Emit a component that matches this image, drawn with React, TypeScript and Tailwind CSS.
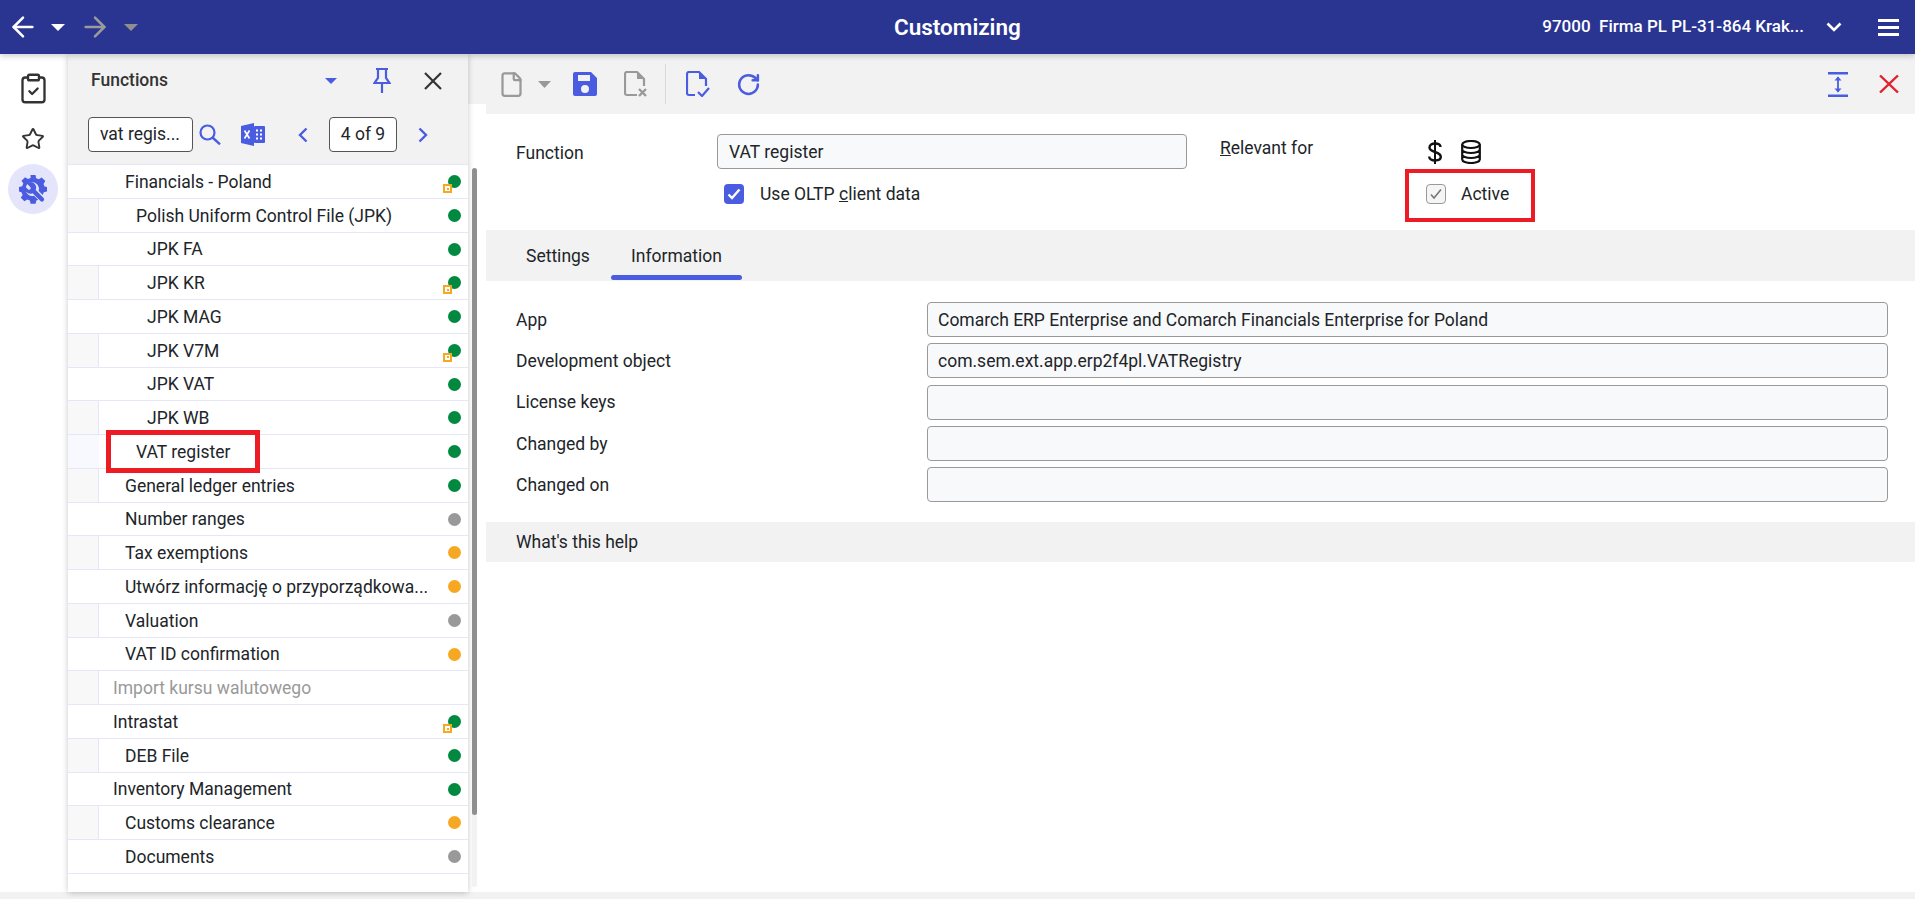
import React from "react";
import { ArrowLeft, ArrowRight, ClipboardCheck, Star, RotateCw, File } from "lucide-react";

const Caret = ({ c, w = 14, h = 7 }: { c: string; w?: number; h?: number }) => (
  <svg width={w} height={h} viewBox="0 0 14 7" preserveAspectRatio="none" className="shrink-0"><path d="M0 0h14L7 7z" fill={c} /></svg>
);

const GREEN = "#00893f", GRAY = "#999999", ORANGE = "#f7a823";
type Row = { t: string; x: number; d?: string; b?: boolean; muted?: boolean };
const rows: Row[] = [
  { t: "Financials - Poland", x: 125, d: GREEN, b: true },
  { t: "Polish Uniform Control File (JPK)", x: 136, d: GREEN },
  { t: "JPK FA", x: 147, d: GREEN },
  { t: "JPK KR", x: 147, d: GREEN, b: true },
  { t: "JPK MAG", x: 147, d: GREEN },
  { t: "JPK V7M", x: 147, d: GREEN, b: true },
  { t: "JPK VAT", x: 147, d: GREEN },
  { t: "JPK WB", x: 147, d: GREEN },
  { t: "VAT register", x: 136, d: GREEN },
  { t: "General ledger entries", x: 125, d: GREEN },
  { t: "Number ranges", x: 125, d: GRAY },
  { t: "Tax exemptions", x: 125, d: ORANGE },
  { t: "Utwórz informację o przyporządkowa...", x: 125, d: ORANGE },
  { t: "Valuation", x: 125, d: GRAY },
  { t: "VAT ID confirmation", x: 125, d: ORANGE },
  { t: "Import kursu walutowego", x: 113, muted: true },
  { t: "Intrastat", x: 113, d: GREEN, b: true },
  { t: "DEB File", x: 125, d: GREEN },
  { t: "Inventory Management", x: 113, d: GREEN },
  { t: "Customs clearance", x: 125, d: ORANGE },
  { t: "Documents", x: 125, d: GRAY },
];

const fields = [
  { l: "App", v: "Comarch ERP Enterprise and Comarch Financials Enterprise for Poland" },
  { l: "Development object", v: "com.sem.ext.app.erp2f4pl.VATRegistry" },
  { l: "License keys", v: "" },
  { l: "Changed by", v: "" },
  { l: "Changed on", v: "" },
];

function TreeRow({ r, i }: { r: Row; i: number }) {
  const cell = i % 2 === 1;
  const sel = i === 8;
  return (
    <div className="relative flex h-[33.76px] border-b border-[#e6e6f8]">
      <div className={cell ? "w-[31px] shrink-0 bg-[#f8f8f8] border-r border-[#e6e6f8]" : sel ? "w-[31px] shrink-0 bg-[#f8f9ff]" : "w-[31px] shrink-0"} />
      <div
        className={"flex items-center whitespace-nowrap pt-[2.5px] text-[17.5px] leading-none " + (r.muted ? "text-[#999999]" : "text-[#212529]")}
        style={{ paddingLeft: r.x - 99 }}
      >
        {r.t}
      </div>
      {r.d && (
        <span className="absolute left-[380px] top-[10px] h-[13px] w-[13px] rounded-full" style={{ background: r.d }} />
      )}
      {r.b && (
        <span className="absolute left-[375px] top-[19px] flex h-[9px] w-[9px] items-center justify-center bg-[#f7a823]">
          <span className="flex h-[5px] w-[5px] items-center justify-center bg-white">
            <span className="h-[2px] w-[2px] bg-[#f7a823]" />
          </span>
        </span>
      )}
    </div>
  );
}

export default function App() {
  return (
    <div className="relative flex h-[899px] w-[1915px] flex-col overflow-hidden bg-white font-['Roboto',sans-serif] text-[#212529]">
      <header className="relative z-20 flex h-[54px] shrink-0 items-center bg-[#2a3592] text-white shadow-[0_2px_6px_rgba(0,0,0,0.2)]">
        <div className="flex items-center pl-[7px]">
          <ArrowLeft size={32} strokeWidth={1.9} />
          <span className="ml-[12px]"><Caret c="#ffffff" /></span>
          <span className="ml-[14px]"><ArrowRight size={32} strokeWidth={1.9} color="#9b9b9b" /></span>
          <span className="ml-[13px]"><Caret c="#8f8f8f" /></span>
        </div>
        <div className="absolute left-[894px] text-[22.5px] font-semibold leading-none">Customizing</div>
        <div className="ml-auto flex items-center pr-[16px]">
          <div className="whitespace-pre text-[17px] font-medium">97000  Firma PL PL-31-864 Krak...</div>
          <svg width="16" height="10" viewBox="0 0 16 10" fill="none" className="ml-[22px]"><path d="M1.5 1.5L8 8l6.5-6.5" stroke="#ffffff" strokeWidth="2.6" /></svg>
          <svg width="21" height="17" viewBox="0 0 21 17" className="ml-[36px]"><path d="M0 0h21v3H0zM0 7h21v3H0zM0 14h21v3H0z" fill="#ffffff" /></svg>
        </div>
      </header>

      <div className="flex min-h-0 flex-1">
        {/* rail */}
        <nav className="flex w-[68px] shrink-0 flex-col items-center pr-[2px] pt-[18px]">
          <ClipboardCheck size={33} strokeWidth={1.7} color="#333333" />
          <Star size={24} strokeWidth={1.9} color="#333333" className="mt-[22px]" />
          <div className="mt-[13px] flex h-[50px] w-[50px] items-center justify-center rounded-full bg-[#e4e5fa]">
            <svg width="30" height="30" viewBox="0 0 30 30">
              <path fill="#4a5ce0" fillRule="evenodd" d="M12.5 1h5l.7 3.2 2.7 1.1 2.8-1.8 3.6 3.6-1.8 2.8 1.1 2.7L29 13v4.5l-3.2.7-1.1 2.7 0 0-4-4a7 7 0 0 0-6.7-8.9a7 7 0 0 0-6.6 7a7 7 0 0 0 8.6 6.8l4.2 4-1.9.8-.7 3.2h-5l-.7-3.2-2.7-1.1-2.8 1.8-3.6-3.6 1.8-2.8-1.1-2.7L1 17.5V13l3.2-.7 1.1-2.7-1.8-2.8 3.6-3.6 2.8 1.8 2.7-1.1z" />
              <path fill="#4a5ce0" d="M15 8.4a6 6 0 0 0-6.1 1.2l3.8 3.8-.3 2-2 .3-3.8-3.8a6 6 0 0 0 8 7.3l7.9 7.9a2.2 2.2 0 0 0 3.1-3.1l-7.9-7.9a6 6 0 0 0-2.7-7.7z" />
            </svg>
          </div>
        </nav>

        {/* panel */}
        <aside className="relative z-10 flex w-[400px] shrink-0 flex-col shadow-[0_1px_6px_rgba(0,0,0,0.22)]">
          <div className="flex h-[110px] shrink-0 flex-col bg-[#f2f2f2]">
            <div className="flex h-[53px] items-center">
              <span className="ml-[23px] w-[77px] whitespace-nowrap text-[17.5px] font-medium text-[#333333]">Functions</span>
              <span className="ml-[157px]"><Caret c="#4a5ce0" w={12} h={6} /></span>
              <svg width="18" height="25" viewBox="0 0 18 25" fill="none" className="ml-[36px]">
                <path d="M3 1h12M5 1v9L1.5 15h15L13 10V1M9 15v10" stroke="#4a5ce0" strokeWidth="2.2" />
              </svg>
              <svg width="18" height="18" viewBox="0 0 18 18" fill="none" className="ml-[33px]">
                <path d="M1 1l16 16M17 1L1 17" stroke="#333333" strokeWidth="2.2" />
              </svg>
            </div>
            <div className="flex items-center pt-[10px]">
              <div className="ml-[20px] flex h-[35px] w-[105px] items-center whitespace-nowrap rounded border border-[#555555] bg-white pl-[11px] text-[17.5px]">vat regis...</div>
              <svg width="22" height="21" viewBox="0 0 22 21" fill="none" className="ml-[6px]">
                <circle cx="8.5" cy="8.5" r="7" stroke="#4a5ce0" strokeWidth="2.2" />
                <path d="M13.5 13.5l7.500 6.800" stroke="#4a5ce0" strokeWidth="2.4" />
              </svg>
              <svg width="24" height="23" viewBox="0 0 24 23" className="ml-[20px]">
                <path fill="#4a5ce0" d="M0 3l13-3v23L0 20z" />
                <rect x="13" y="3" width="11" height="17" rx="1" fill="#4a5ce0" />
                <path d="M3.5 7.5l5 8M8.5 7.5l-5 8" stroke="#ffffff" strokeWidth="1.7" />
                <path d="M15 6.5h2v2h-2zM19 6.5h2v2h-2zM15 10.5h2v2h-2zM19 10.5h2v2h-2zM15 14.5h2v2h-2zM19 14.5h2v2h-2z" fill="#ffffff" />
              </svg>
              <svg width="10" height="16" viewBox="0 0 10 16" fill="none" className="ml-[33px]"><path d="M8.5 1.5L2 8l6.5 6.5" stroke="#4a5ce0" strokeWidth="2.4" /></svg>
              <div className="ml-[21px] flex h-[35px] w-[68px] items-center justify-center whitespace-nowrap rounded border border-[#555555] bg-white text-[17.5px]">4 of 9</div>
              <svg width="10" height="16" viewBox="0 0 10 16" fill="none" className="ml-[21px]"><path d="M1.5 1.5L8 8l-6.5 6.5" stroke="#4a5ce0" strokeWidth="2.4" /></svg>
            </div>
          </div>
          <div className="relative min-h-0 flex-1 bg-white">
            <div className="w-[400px] border-t border-[#e6e6f8]">
              {rows.map((r, i) => (
                <TreeRow key={r.t} r={r} i={i} />
              ))}
            </div>
            <div className="absolute left-[404px] top-[4px] h-[719px] w-[5px] rounded bg-[#f2f2f2]">
              <div className="h-[647px] w-[5px] rounded bg-[#8f8f8f]" />
            </div>
          </div>
        </aside>

        {/* gutter */}
        <div className="w-[18px] shrink-0">
          <div className="h-[50px] bg-[#f2f2f2]" />
        </div>

        {/* main */}
        <main className="flex min-w-0 flex-1 flex-col">
          <div className="flex h-[60px] shrink-0 items-center bg-[#f2f2f2] pl-[12px]">
            <File size={27} strokeWidth={2} color="#999999" />
            <span className="ml-[13px]"><Caret c="#999999" w={13} h={7} /></span>
            <svg width="24" height="24" viewBox="0 0 24 24" className="ml-[22px]">
              <path fillRule="evenodd" fill="#4a5ce0" d="M2 0h16l6 6v16a2 2 0 0 1-2 2H2a2 2 0 0 1-2-2V2a2 2 0 0 1 2-2zM5 3v6h12V3zM12 13a4 4 0 1 0 0 8a4 4 0 0 0 0-8z" />
            </svg>
            <svg width="24" height="26" viewBox="0 0 24 26" fill="none" className="ml-[27px]">
              <path d="M13 24H3a2 2 0 0 1-2-2V3a2 2 0 0 1 2-2h10l7 7v7" stroke="#999999" strokeWidth="2.2" />
              <path d="M13 1v7h7z" fill="#999999" />
              <path d="M15 18l7 7M22 18l-7 7" stroke="#999999" strokeWidth="2.4" />
            </svg>
            <div className="ml-[17px] h-[40px] w-px bg-[#d9d9d9]" />
            <svg width="24" height="26" viewBox="0 0 24 26" fill="none" className="ml-[20px]">
              <path d="M9 24H3a2 2 0 0 1-2-2V3a2 2 0 0 1 2-2h10l7 7v7" stroke="#4a5ce0" strokeWidth="2.2" />
              <path d="M13 1v7h7z" fill="#4a5ce0" />
              <path d="M12 21l4 4l7-8" stroke="#4a5ce0" strokeWidth="2.2" />
            </svg>
            <RotateCw size={25} strokeWidth={2.4} color="#4a5ce0" className="ml-[26px]" />
            <div className="ml-auto flex items-center pr-[16px]">
              <svg width="20" height="25" viewBox="0 0 20 25" fill="none">
                <path d="M0 1.2h20M0 23.8h20" stroke="#4a5ce0" strokeWidth="2.4" />
                <path d="M10 5v15" stroke="#4a5ce0" strokeWidth="1.8" />
                <path d="M6.5 8.5L10 4.5l3.5 4zM6.5 16.5L10 20.5l3.5-4z" fill="#4a5ce0" />
              </svg>
              <svg width="20" height="18" viewBox="0 0 20 18" fill="none" className="ml-[31px]">
                <path d="M1 .5l18 17M19 .5L1 17.5" stroke="#e1232f" strokeWidth="2.4" />
              </svg>
            </div>
          </div>

          <section className="relative h-[116px] shrink-0">
            <div className="flex items-start pl-[30px] pt-[20px]">
              <span className="flex h-[38px] w-[201px] items-center text-[17.5px]">Function</span>
              <div className="flex h-[35px] w-[470px] items-center rounded border border-[#999999] bg-[#f8f9fa] pl-[11px] pt-[1px] text-[17.5px]">VAT register</div>
              <div className="ml-[33px] w-[208px] whitespace-nowrap pt-[1px] text-[17.5px]"><span className="underline">R</span>elevant for</div>
              <div className="flex items-center gap-[19px] pt-[6px]">
                <svg width="14" height="24" viewBox="0 0 14 24" fill="none">
                  <path d="M7 0v24" stroke="#111111" strokeWidth="2" />
                  <path d="M12.5 7c0-2.5-2.500-3.500-5.500-3.500S1.500 5 1.500 7.500 4 11 7 12s5.800 2 5.800 4.800-2.800 3.700-5.800 3.700S1.200 19 1.200 16.500" stroke="#111111" strokeWidth="2.4" />
                </svg>
                <svg width="20" height="24" viewBox="0 0 20 24" fill="none">
                  <ellipse cx="10" cy="4.500" rx="8.800" ry="3.500" stroke="#111111" strokeWidth="2.200" />
                  <path d="M1.200 4.500v15c0 2 3.900 3.500 8.800 3.500s8.800-1.500 8.800-3.500v-15M1.200 9.500c0 2 3.900 3.500 8.800 3.500s8.800-1.500 8.800-3.500M1.200 14.500c0 2 3.900 3.500 8.800 3.500s8.800-1.500 8.800-3.500" stroke="#111111" strokeWidth="2.200" />
                </svg>
              </div>
            </div>
            <div className="flex items-center pl-[238px] pt-[9px] text-[17.5px]">
              <div className="flex w-[702px] items-center">
                <span className="flex h-[20px] w-[20px] items-center justify-center rounded-[4px] bg-[#4a5ce0]">
                  <svg width="14" height="12" viewBox="0 0 14 12" fill="none"><path d="M1.500 6.500l3.500 3.500l7.500-8.500" stroke="#ffffff" strokeWidth="2.400" /></svg>
                </span>
                <span className="ml-[16px]">Use OLTP <span className="underline">c</span>lient data</span>
              </div>
              <span className="flex h-[20px] w-[20px] items-center justify-center rounded-[4px] border border-[#999999] bg-[#f5f5f5]">
                <svg width="14" height="12" viewBox="0 0 14 12" fill="none"><path d="M2 6.500l3 3.500l7-8.500" stroke="#777777" strokeWidth="1.600" /></svg>
              </span>
              <span className="ml-[15px]">Active</span>
            </div>
            <div className="pointer-events-none absolute left-[919px] top-[55px] h-[53px] w-[130px] border-4 border-[#ed1c24]" />
          </section>

          <div className="flex h-[51px] shrink-0 bg-[#f2f2f2] pl-[40px] pt-[2px] text-[17.5px]">
            <div className="flex w-[65px] items-center whitespace-nowrap">Settings</div>
            <div className="relative ml-[20px] flex w-[131px] items-center justify-center whitespace-nowrap">
              Information
              <span className="absolute bottom-[1px] left-0 h-[5px] w-full rounded-[3px] bg-[#4a5ce0]" />
            </div>
          </div>

          <section className="flex h-[241px] shrink-0 flex-col pl-[30px] pr-[27px] pt-[21px]">
            {fields.map((f) => (
              <div key={f.l} className="mb-[6.25px] flex h-[35px] items-center">
                <span className="w-[411px] shrink-0 pt-[1px] text-[17.5px]">{f.l}</span>
                <div className="flex h-[35px] flex-1 items-center rounded border border-[#999999] bg-[#f8f9fa] pl-[10px] pt-[1px] text-[17.5px]">{f.v}</div>
              </div>
            ))}
          </section>

          <div className="flex h-[40px] shrink-0 items-center bg-[#f2f2f2] pl-[30px] text-[17.5px]">What's this help</div>
        </main>
      </div>

      <div className="h-[7px] shrink-0 bg-[#f2f2f2]" />

      <div className="pointer-events-none absolute left-[106px] top-[430px] z-30 h-[43px] w-[154px] border-[5px] border-[#ed1c24]" />
    </div>
  );
}
